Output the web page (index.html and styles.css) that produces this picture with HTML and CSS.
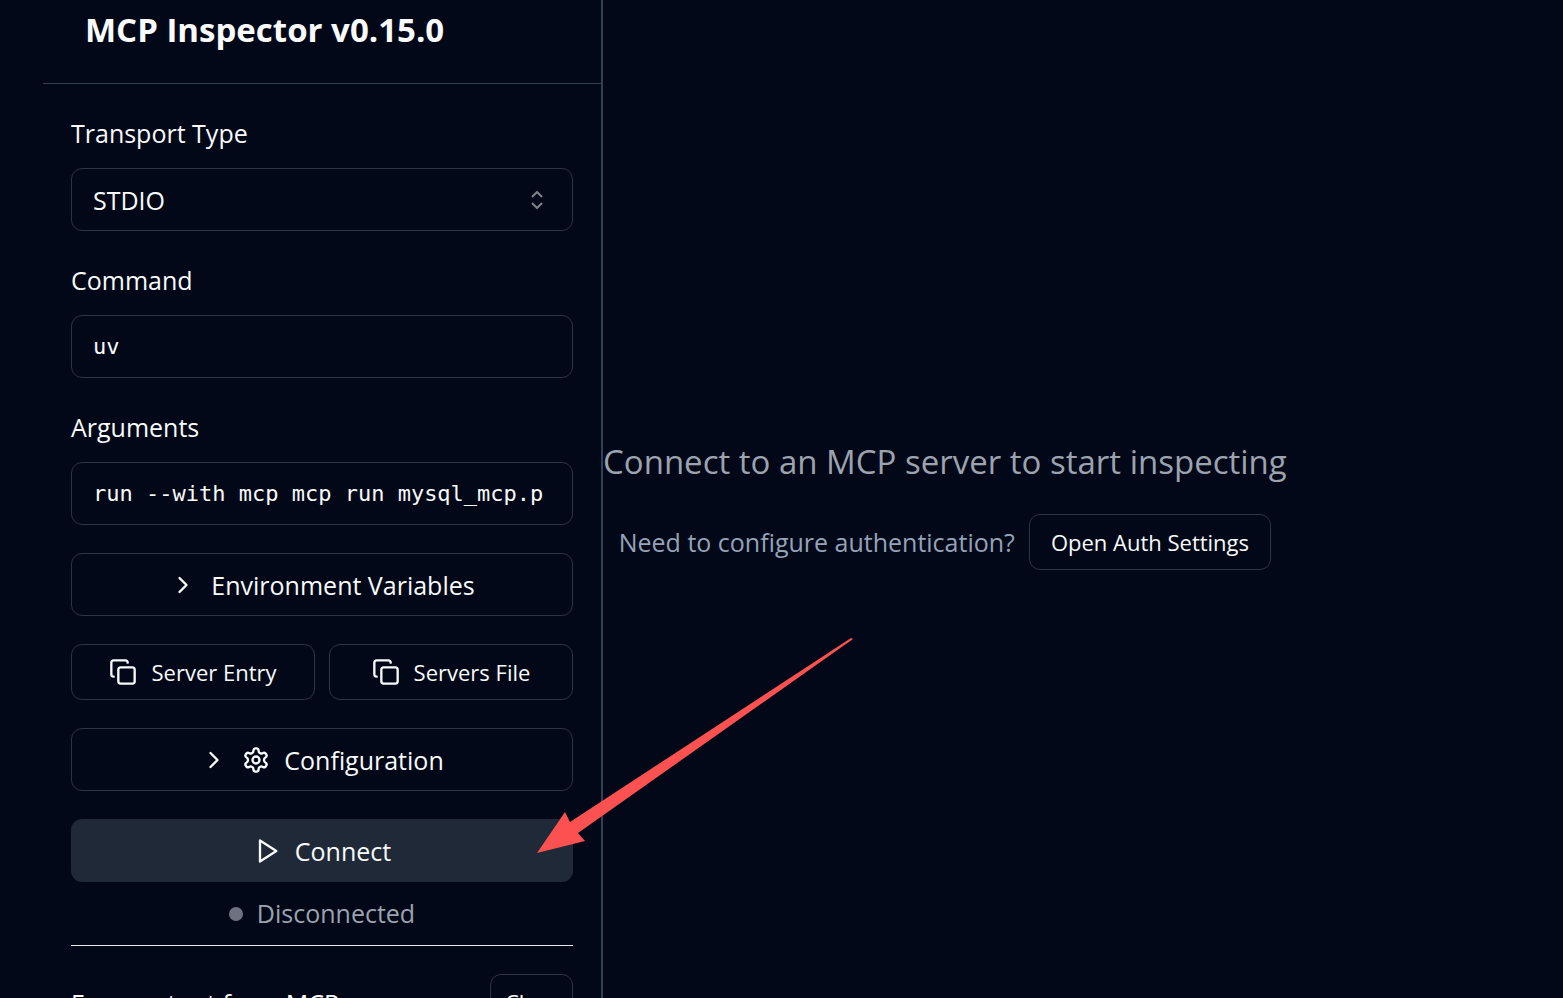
FILE: index.html
```html
<!DOCTYPE html>
<html lang="en">
<head>
  <meta charset="UTF-8" />
  <meta name="viewport" content="width=device-width, initial-scale=1.0"/>
  <title>MCP Inspector</title>
  <link rel="stylesheet" href="styles.css">
</head>
<body>
  <div class="app">
    <aside class="sidebar">
      <header class="sidebar-header">
        <h1>MCP Inspector v0.15.0</h1>
      </header>

      <form class="sidebar-body">
        <div class="field">
          <label for="transport">Transport Type</label>
          <div class="select-wrap">
            <select id="transport" class="control">
              <option>STDIO</option>
              <option>SSE</option>
              <option>Streamable HTTP</option>
            </select>
            <svg class="icon caret" viewBox="0 0 28 28"><path d="M9 11l5-5 5 5M9 17l5 5 5-5"/></svg>
          </div>
        </div>

        <div class="field">
          <label for="command">Command</label>
          <input id="command" class="control mono" type="text" value="uv">
        </div>

        <div class="field">
          <label for="arguments">Arguments</label>
          <input id="arguments" class="control mono" type="text" value="run --with mcp mcp run mysql_mcp.p">
        </div>

        <button type="button" class="btn">
          <svg class="icon" viewBox="0 0 24 24"><path d="m9 18 6-6-6-6"/></svg>
          Environment Variables
        </button>

        <div class="copy-row">
          <button type="button" class="btn btn-small">
            <svg class="icon" viewBox="0 0 24 24"><rect width="14" height="14" x="8" y="8" rx="2"/><path d="M4 16c-1.1 0-2-.9-2-2V4c0-1.1.9-2 2-2h10c1.1 0 2 .9 2 2"/></svg>
            Server Entry
          </button>
          <button type="button" class="btn btn-small">
            <svg class="icon" viewBox="0 0 24 24"><rect width="14" height="14" x="8" y="8" rx="2"/><path d="M4 16c-1.1 0-2-.9-2-2V4c0-1.1.9-2 2-2h10c1.1 0 2 .9 2 2"/></svg>
            Servers File
          </button>
        </div>

        <button type="button" class="btn">
          <svg class="icon" viewBox="0 0 24 24"><path d="m9 18 6-6-6-6"/></svg>
          <svg class="icon" viewBox="0 0 24 24"><path d="M12.22 2h-.44a2 2 0 0 0-2 2v.18a2 2 0 0 1-1 1.73l-.43.25a2 2 0 0 1-2 0l-.15-.08a2 2 0 0 0-2.73.73l-.22.38a2 2 0 0 0 .73 2.73l.15.1a2 2 0 0 1 1 1.72v.51a2 2 0 0 1-1 1.74l-.15.09a2 2 0 0 0-.73 2.73l.22.38a2 2 0 0 0 2.73.73l.15-.08a2 2 0 0 1 2 0l.43.25a2 2 0 0 1 1 1.73V20a2 2 0 0 0 2 2h.44a2 2 0 0 0 2-2v-.18a2 2 0 0 1 1-1.73l.43-.25a2 2 0 0 1 2 0l.15.08a2 2 0 0 0 2.73-.73l.22-.39a2 2 0 0 0-.73-2.73l-.15-.08a2 2 0 0 1-1-1.74v-.5a2 2 0 0 1 1-1.74l.15-.09a2 2 0 0 0 .73-2.73l-.22-.38a2 2 0 0 0-2.73-.73l-.15.08a2 2 0 0 1-2 0l-.43-.25a2 2 0 0 1-1-1.73V4a2 2 0 0 0-2-2z"/><circle cx="12" cy="12" r="3"/></svg>
          Configuration
        </button>

        <div class="connect">
          <button type="button" class="btn btn-connect">
            <svg class="icon" viewBox="0 0 24 24"><path d="M6 3l14 9-14 9z"/></svg>
            Connect
          </button>
          <div class="status"><span class="dot"></span>Disconnected</div>
          <hr>
        </div>

        <div class="errors">
          <h2>Error output from MCP server</h2>
          <button type="button" class="btn btn-small">Clear</button>
        </div>
      </form>
    </aside>

    <main class="main">
      <p class="lead">Connect to an MCP server to start inspecting</p>
      <div class="auth">
        <p>Need to configure authentication?</p>
        <button type="button" class="btn btn-small">Open Auth Settings</button>
      </div>
    </main>

    <!-- arrow pointing at the connect button -->
    <svg class="arrow" width="318" height="218" viewBox="0 0 318 218"><path d="M1 217L29 176 34 186 315 2 317 3 42 197 49 205z"/></svg>
  </div>
</body>
</html>
```
FILE: styles.css
```css
* {
  box-sizing: border-box;
}

body {
  margin: 0;
  background: #020817;
  color: #f8fafc;
  font-family: "Open Sans", "Noto Sans", sans-serif;
  font-size: 25px;
}

h1, h2, p {
  margin: 0;
}

.app {
  position: relative;
  display: flex;
  height: 100vh;
  overflow: hidden;
}

/* sidebar */
.sidebar {
  flex: none;
  width: 560px;
  margin-left: 43px;
  border-right: 2px solid #334155;
}

.sidebar-header {
  padding: 5px 42px 29px;
  border-bottom: 1px solid #334155;
}

.sidebar-header h1 {
  font-size: 33px;
  line-height: 49px;
  font-weight: 700;
  white-space: nowrap;
}

.sidebar-body {
  display: flex;
  flex-direction: column;
  gap: 28px;
  padding: 28px;
}

.field {
  display: flex;
  flex-direction: column;
  gap: 14px;
}

.field label {
  line-height: 42px;
}

.control {
  width: 100%;
  height: 63px;
  padding: 0 21px;
  border: 1px solid #2b3444;
  border-radius: 11px;
  background: transparent;
  color: inherit;
  font: inherit;
  appearance: none;
}

.mono {
  font-family: "DejaVu Sans Mono", monospace;
  font-size: 22px;
}

.select-wrap {
  position: relative;
}

.icon {
  flex: none;
  width: 28px;
  height: 28px;
  fill: none;
  stroke: currentColor;
  stroke-width: 2;
  stroke-linecap: round;
  stroke-linejoin: round;
}

.caret {
  position: absolute;
  top: 18px;
  right: 22px;
  stroke-linecap: butt;
  opacity: 0.5;
  pointer-events: none;
}

.btn {
  display: flex;
  align-items: center;
  justify-content: center;
  gap: 14px;
  height: 63px;
  padding: 0 21px;
  border: 1px solid #2b3444;
  border-radius: 11px;
  background: transparent;
  color: inherit;
  font: inherit;
  white-space: nowrap;
  cursor: pointer;
}

.btn-small {
  height: 56px;
  font-size: 22px;
}

.copy-row {
  display: grid;
  grid-template-columns: 1fr 1fr;
  gap: 14px;
}

.connect {
  display: flex;
  flex-direction: column;
  gap: 14px;
}

.btn-connect {
  border: none;
  background: #1f2937;
}

.status {
  display: flex;
  align-items: center;
  justify-content: center;
  gap: 14px;
  line-height: 35px;
  color: #9ca3af;
}

.dot {
  width: 14px;
  height: 14px;
  border-radius: 50%;
  background: #6b7280;
}

hr {
  width: 100%;
  margin: 0;
  border: none;
  border-top: 1px solid #e5e7eb;
}

.errors {
  display: flex;
  justify-content: space-between;
  align-items: flex-start;
}

.errors h2 {
  width: 300px;
  padding-top: 12px;
  font-size: 25px;
  line-height: 35px;
  font-weight: 400;
}

.errors .btn {
  padding: 0 14px;
}

/* main area */
.main {
  display: flex;
  flex-direction: column;
  align-items: center;
  justify-content: center;
  gap: 28px;
  padding-top: 8px;
}

.lead {
  color: #9ca3af;
  font-size: 33px;
  line-height: 49px;
}

.auth {
  display: flex;
  align-items: center;
  gap: 14px;
  color: #94a3b8;
}

.auth .btn {
  color: #f8fafc;
}

.arrow {
  position: absolute;
  top: 636px;
  left: 536px;
  fill: #fb5251;
  pointer-events: none;
}
```
